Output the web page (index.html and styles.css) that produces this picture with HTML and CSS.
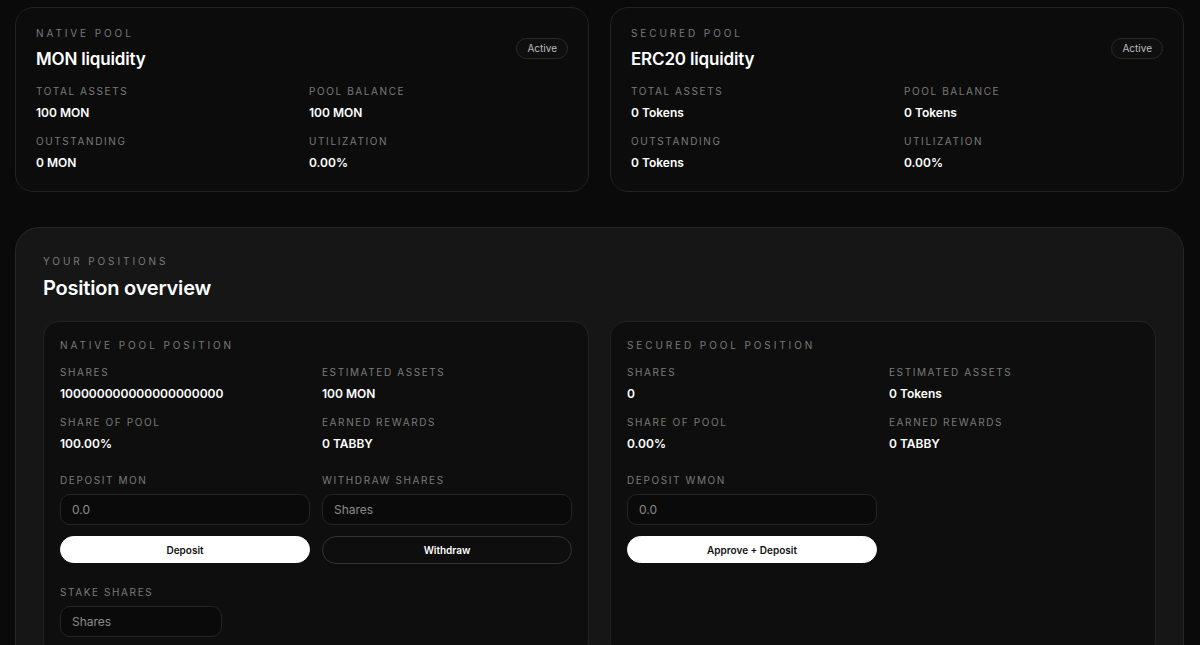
FILE: index.html
```html
<!DOCTYPE html>
<html lang="en">
<head>
<meta charset="utf-8">
<title>Pools</title>
<link rel="stylesheet" href="styles.css">
</head>
<body>
<main class="page">
  <section class="pools">
    <article class="pool-card">
      <header class="pool-head">
        <div>
          <div class="label eyebrow">Native pool</div>
          <h2 class="pool-title">MON liquidity</h2>
        </div>
        <span class="badge">Active</span>
      </header>
      <div class="stats pool-stats">
        <div class="stat"><div class="label">Total assets</div><div class="value">100 MON</div></div>
        <div class="stat"><div class="label">Pool balance</div><div class="value">100 MON</div></div>
        <div class="stat"><div class="label">Outstanding</div><div class="value">0 MON</div></div>
        <div class="stat"><div class="label">Utilization</div><div class="value">0.00%</div></div>
      </div>
    </article>
    <article class="pool-card">
      <header class="pool-head">
        <div>
          <div class="label eyebrow">Secured pool</div>
          <h2 class="pool-title">ERC20 liquidity</h2>
        </div>
        <span class="badge">Active</span>
      </header>
      <div class="stats pool-stats">
        <div class="stat"><div class="label">Total assets</div><div class="value">0 Tokens</div></div>
        <div class="stat"><div class="label">Pool balance</div><div class="value">0 Tokens</div></div>
        <div class="stat"><div class="label">Outstanding</div><div class="value">0 Tokens</div></div>
        <div class="stat"><div class="label">Utilization</div><div class="value">0.00%</div></div>
      </div>
    </article>
  </section>

  <section class="positions">
    <div class="label eyebrow">Your positions</div>
    <h1 class="positions-title">Position overview</h1>
    <div class="position-grid">
      <article class="position-card">
        <div class="label eyebrow">Native pool position</div>
        <div class="stats pos-stats">
          <div class="stat"><div class="label">Shares</div><div class="value">100000000000000000000</div></div>
          <div class="stat"><div class="label">Estimated assets</div><div class="value">100 MON</div></div>
          <div class="stat"><div class="label">Share of pool</div><div class="value">100.00%</div></div>
          <div class="stat"><div class="label">Earned rewards</div><div class="value">0 TABBY</div></div>
        </div>
        <div class="forms">
          <div class="form">
            <div class="label">Deposit MON</div>
            <input class="field" type="text" placeholder="0.0">
            <button class="btn btn-primary">Deposit</button>
          </div>
          <div class="form">
            <div class="label">Withdraw shares</div>
            <input class="field" type="text" placeholder="Shares">
            <button class="btn btn-outline">Withdraw</button>
          </div>
          <div class="form">
            <div class="label">Stake shares</div>
            <input class="field field-short" type="text" placeholder="Shares">
          </div>
        </div>
      </article>
      <article class="position-card">
        <div class="label eyebrow">Secured pool position</div>
        <div class="stats pos-stats">
          <div class="stat"><div class="label">Shares</div><div class="value">0</div></div>
          <div class="stat"><div class="label">Estimated assets</div><div class="value">0 Tokens</div></div>
          <div class="stat"><div class="label">Share of pool</div><div class="value">0.00%</div></div>
          <div class="stat"><div class="label">Earned rewards</div><div class="value">0 TABBY</div></div>
        </div>
        <div class="forms">
          <div class="form">
            <div class="label">Deposit WMON</div>
            <input class="field" type="text" placeholder="0.0">
            <button class="btn btn-primary">Approve + Deposit</button>
          </div>
        </div>
      </article>
    </div>
  </section>
</main>
</body>
</html>
```

FILE: styles.css
```css
* { box-sizing: border-box; }

html, body {
  margin: 0;
  background: #0a0a0a;
  color: #fff;
  font-family: "Inter", "Liberation Sans", sans-serif;
}

.page {
  padding: 7px 16px 40px 15px;
}

.pools {
  display: grid;
  grid-template-columns: 1fr 1fr;
  gap: 21px;
}

.pool-card {
  background: #0c0c0c;
  border: 1px solid #222;
  border-radius: 18px;
  padding: 18px 20px 20px;
}

.pool-head {
  display: flex;
  justify-content: space-between;
  align-items: center;
}

.label {
  font-size: 10px;
  line-height: 14px;
  letter-spacing: 1.6px;
  text-transform: uppercase;
  color: #7a7a7a;
  font-weight: 400;
}

.label.eyebrow {
  letter-spacing: 2.9px;
}

.pool-title {
  margin: 7px 0 0;
  font-size: 17px;
  line-height: 24px;
  font-weight: 600;
  letter-spacing: -0.01em;
}

.badge {
  display: inline-block;
  font-size: 10px;
  line-height: 19px;
  padding: 0 10px;
  border: 1px solid #2a2a2a;
  border-radius: 999px;
  color: #bdbdbd;
  background: #0f0f0f;
}

.stats {
  display: grid;
  grid-template-columns: 1fr 1fr;
  row-gap: 13px;
}

.pool-stats {
  margin-top: 13px;
  column-gap: 14px;
}

.stat .value {
  margin-top: 7px;
  font-size: 12px;
  line-height: 16px;
  font-weight: 600;
  color: #fff;
}

.positions {
  margin-top: 35px;
  background: #161616;
  border: 1px solid #262626;
  border-radius: 24px;
  padding: 26px 27px 30px;
}

.positions-title {
  margin: 8px 0 0;
  font-size: 20px;
  line-height: 24px;
  font-weight: 600;
  letter-spacing: -0.01em;
}

.position-grid {
  margin-top: 21px;
  display: grid;
  grid-template-columns: 1fr 1fr;
  gap: 21px;
}

.position-card {
  background: #0e0e0e;
  border: 1px solid #232323;
  border-radius: 16px;
  padding: 16px 16px 20px;
}

.pos-stats {
  margin-top: 13px;
  column-gap: 12px;
}

.forms {
  margin-top: 21px;
  display: grid;
  grid-template-columns: 1fr 1fr;
  column-gap: 12px;
  row-gap: 21px;
}

.form {
  display: flex;
  flex-direction: column;
  align-items: stretch;
}

.field {
  margin-top: 7px;
  height: 31px;
  background: #0a0a0a;
  border: 1px solid #242424;
  border-radius: 10px;
  padding: 0 11px;
  font-family: inherit;
  font-size: 12px;
  color: #fff;
  outline: none;
}

.field::placeholder { color: #8a8a8a; }

.field-short { width: 162px; }

.btn {
  margin-top: 11px;
  height: 27px;
  border-radius: 999px;
  font-family: inherit;
  font-size: 10px;
  font-weight: 600;
  cursor: pointer;
}

.btn-primary {
  background: #fff;
  color: #111;
  border: 1px solid #fff;
}

.btn-outline {
  background: transparent;
  color: #fff;
  border: 1px solid #333;
  height: 28px;
}
```
